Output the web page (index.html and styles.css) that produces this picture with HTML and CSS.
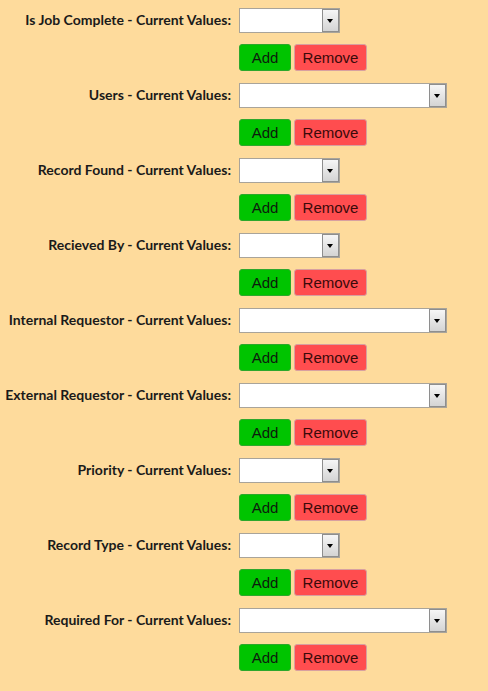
FILE: index.html
```html
<!DOCTYPE html>
<html>
<head>
<meta charset="utf-8">
<link rel="stylesheet" href="styles.css">
</head>
<body>
<div class="form">
  <div class="label">Is Job Complete - Current Values:</div>
  <div class="field"><div class="select short"><span class="arrow"></span></div></div>
  <div class="spacer"></div>
  <div class="buttons"><button class="btn add">Add</button><button class="btn remove">Remove</button></div>

  <div class="label">Users - Current Values:</div>
  <div class="field"><div class="select wide"><span class="arrow"></span></div></div>
  <div class="spacer"></div>
  <div class="buttons"><button class="btn add">Add</button><button class="btn remove">Remove</button></div>

  <div class="label">Record Found - Current Values:</div>
  <div class="field"><div class="select short"><span class="arrow"></span></div></div>
  <div class="spacer"></div>
  <div class="buttons"><button class="btn add">Add</button><button class="btn remove">Remove</button></div>

  <div class="label">Recieved By - Current Values:</div>
  <div class="field"><div class="select short"><span class="arrow"></span></div></div>
  <div class="spacer"></div>
  <div class="buttons"><button class="btn add">Add</button><button class="btn remove">Remove</button></div>

  <div class="label">Internal Requestor - Current Values:</div>
  <div class="field"><div class="select wide"><span class="arrow"></span></div></div>
  <div class="spacer"></div>
  <div class="buttons"><button class="btn add">Add</button><button class="btn remove">Remove</button></div>

  <div class="label">External Requestor - Current Values:</div>
  <div class="field"><div class="select wide"><span class="arrow"></span></div></div>
  <div class="spacer"></div>
  <div class="buttons"><button class="btn add">Add</button><button class="btn remove">Remove</button></div>

  <div class="label">Priority - Current Values:</div>
  <div class="field"><div class="select short"><span class="arrow"></span></div></div>
  <div class="spacer"></div>
  <div class="buttons"><button class="btn add">Add</button><button class="btn remove">Remove</button></div>

  <div class="label">Record Type - Current Values:</div>
  <div class="field"><div class="select short"><span class="arrow"></span></div></div>
  <div class="spacer"></div>
  <div class="buttons"><button class="btn add">Add</button><button class="btn remove">Remove</button></div>

  <div class="label">Required For - Current Values:</div>
  <div class="field"><div class="select wide"><span class="arrow"></span></div></div>
  <div class="spacer"></div>
  <div class="buttons"><button class="btn add">Add</button><button class="btn remove">Remove</button></div>
</div>
</body>
</html>
```
FILE: styles.css
```css
html, body {
  margin: 0;
  padding: 0;
  background: #fedb9c;
}
body {
  padding: 8px 0 0 0;
}
.form {
  display: grid;
  grid-template-columns: 231px auto;
  column-gap: 8px;
  align-items: center;
}
.label {
  text-align: right;
  font-family: Lato, "Open Sans", sans-serif;
  font-weight: bold;
  font-size: 14px;
  color: #1a1a1a;
  height: 25px;
  line-height: 23px;
  white-space: nowrap;
}
.field {
  height: 25px;
}
.spacer { height: 27px; }
.buttons {
  display: flex;
  gap: 3px;
  margin: 11px 0 12px 0;
  height: 27px;
}
.select {
  box-sizing: border-box;
  height: 25px;
  background: #fff;
  border: 1px solid #a9a49a;
  position: relative;
}
.select.short { width: 101px; }
.select.wide { width: 208px; }
.arrow {
  position: absolute;
  right: 0;
  top: 0;
  bottom: 0;
  width: 17px;
  box-sizing: border-box;
  border: 1px solid #8e8e8e;
  background: linear-gradient(#f6f6f6, #d4d4d4);
}
.arrow::after {
  content: "";
  position: absolute;
  left: 4px;
  top: 9px;
  border-left: 3.5px solid transparent;
  border-right: 3.5px solid transparent;
  border-top: 4px solid #000;
}
.btn {
  box-sizing: border-box;
  height: 27px;
  border-radius: 3px;
  font-family: "Liberation Sans", Arial, sans-serif;
  font-size: 15px;
  padding: 0;
  margin: 0;
}
.btn.add {
  width: 52px;
  background: #00c400;
  border: 1px solid #2ca82c;
  color: #0d1a0d;
}
.btn.remove {
  width: 73px;
  background: #ff4d4f;
  border: 1px solid #d8a0a0;
  color: #3a0a0a;
}
```
